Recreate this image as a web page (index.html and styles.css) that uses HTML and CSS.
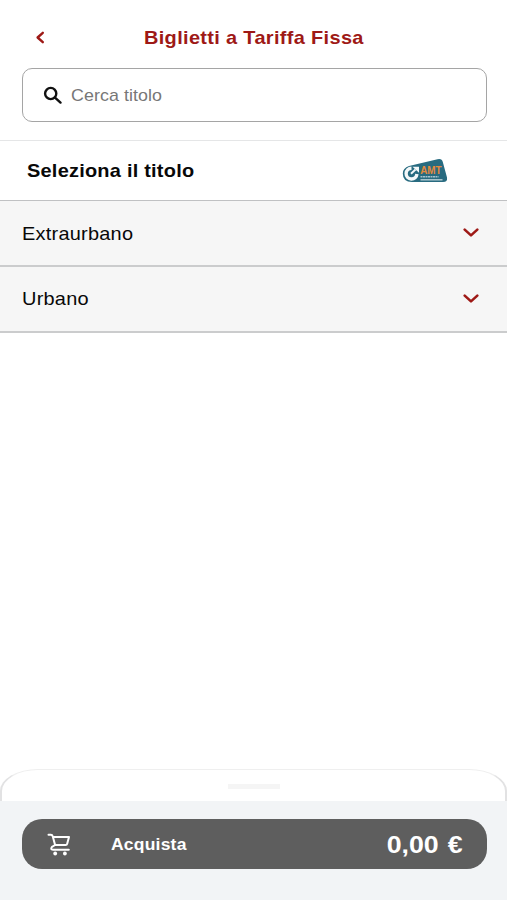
FILE: index.html
```html
<!DOCTYPE html>
<html lang="it">
<head>
<meta charset="utf-8">
<title>Biglietti a Tariffa Fissa</title>
<link rel="stylesheet" href="styles.css">
</head>
<body>
<div class="app">
  <header class="topbar">
    <svg class="back" viewBox="0 0 10 14" fill="none"><path d="M7.800 1.800 2.600 6.500l5.200 4.700"/></svg>
    <h1 class="title">Biglietti a Tariffa Fissa</h1>
  </header>
  <div class="search">
    <svg class="search-icon" viewBox="0 0 20 18" fill="none"><circle cx="7.700" cy="7.500" r="5.600"/><path d="m12 11.600 5.500 5"/></svg>
    <span class="placeholder">Cerca titolo</span>
  </div>
  <section class="heading">
    <h2 class="subtitle">Seleziona il titolo</h2>
    <svg class="logo" viewBox="0 0 46 26">
      <path d="M7 8 35.500 1.200q4.500-1 5.300 2.800L45 19.500q.8 4.500-4 4.500H10Q.8 24 .8 15.500.8 10 7 8Z" fill="#286b80"/>
      <path d="M9.500 10.200A5.400 5.400 0 1 0 14.900 16" fill="none" stroke="#f4f8f9" stroke-width="3.400"/>
      <path d="M9 15.700 13.500 11.500" fill="none" stroke="#f4f8f9" stroke-width="2"/>
      <path d="M10.500 8.800H17V14.800Z" fill="#f4f8f9"/>
      <text class="logo-name" x="18.200" y="16.300" textLength="21.500" lengthAdjust="spacingAndGlyphs">AMT</text>
      <path d="M18.500 18.700h18" stroke="#a8c3cb" stroke-width="1.600" stroke-dasharray="2 .5"/>
      <path d="M18.500 21.800h22" stroke="#b6ced5" stroke-width="1.400"/>
    </svg>
  </section>
  <ul class="list">
    <li class="row"><span class="row-label">Extraurbano</span><svg class="chevron" viewBox="0 0 18 10" fill="none"><path d="m2.700 1.600 6.300 5.800 6.300-5.800"/></svg></li>
    <li class="row"><span class="row-label">Urbano</span><svg class="chevron" viewBox="0 0 18 10" fill="none"><path d="m2.700 1.600 6.300 5.800 6.300-5.800"/></svg></li>
  </ul>
  <div class="sheet"><div class="handle"></div></div>
  <footer class="footer">
    <div class="buy">
      <svg class="cart" viewBox="0 0 24 24" fill="none"><path d="M1.500 2.800h2.300q1.500 0 2 1.700l2.300 8.500h10.500q1.300 0 1.600-1.300L22 5H6M8.100 13 5 14.800q-2 3 1 3h15.800"/><circle class="wheel" cx="8.200" cy="21.500" r="1.900"/><circle class="wheel" cx="17.900" cy="21.500" r="1.900"/></svg>
      <span class="buy-label">Acquista</span>
      <span class="price">0,00 €</span>
    </div>
  </footer>
</div>
</body>
</html>
```
FILE: styles.css
```css
* { box-sizing: border-box; }
body { margin: 0; background: #fff; font-family: "Liberation Sans", Arial, sans-serif; color: #080808; }
.app { width: 507px; height: 900px; display: flex; flex-direction: column; overflow: hidden; }
.topbar { height: 68px; padding: 8px 0 0 35px; display: flex; align-items: center; }
.back { width: 10px; height: 14px; stroke: #9e1916; stroke-width: 2.4; stroke-linecap: round; stroke-linejoin: round; }

/* Labels use a slightly extended face */
.title, .placeholder, .subtitle, .row-label, .buy-label { transform: scaleX(1.05); transform-origin: left center; white-space: nowrap; }
.title { margin: 0 0 0 98.500px; font-size: 19px; line-height: 24px; color: #9e1916; letter-spacing: .32px; }
.search { height: 54px; margin: 0 20.500px 0 21.500px; padding-left: 20px; border: 1px solid #a5a5a5; border-radius: 10px; display: flex; align-items: center; }
.search-icon { width: 20px; height: 18px; stroke: #111; stroke-width: 2.4; stroke-linecap: round; }
.placeholder { margin-left: 8px; padding-top: 1px; font-size: 17px; color: #777; letter-spacing: .05px; }
.heading { height: 60px; margin-top: 18px; padding: 0 59px 0 26.500px; border-top: 1px solid #e5e6e7; display: flex; align-items: center; justify-content: space-between; }
.subtitle { margin: 0; font-size: 19px; letter-spacing: .22px; }
.logo { width: 46px; height: 26px; }
.logo-name { font: bold 10px "Liberation Sans", Arial, sans-serif; fill: #e58a3c; }
.list { margin: 0; padding: 0; list-style: none; background: #f6f6f6; border-top: 1px solid #c0c1c3; }
.row { height: 66px; padding: 0 27px 0 21.500px; border-bottom: 2px solid #cbcccd; display: flex; align-items: center; justify-content: space-between; font-size: 19px; }
.row-label { padding-top: 1px; letter-spacing: .22px; }
.row:last-child .row-label { padding-top: 0; }
.chevron { width: 18px; height: 10px; stroke: #9e1916; stroke-width: 2.6; stroke-linecap: round; stroke-linejoin: round; }
.sheet { height: 32px; margin-top: auto; border: 1px solid #ededed; border-width: 1px 2px 0; border-color: #efefef #e2e2e3; border-radius: 38px 38px 0 0 / 22px 22px 0 0; display: flex; justify-content: center; }
.handle { width: 52px; height: 5px; margin-top: 14px; background: #f5f5f5; }
.footer { height: 99px; padding: 18px 20.500px 0 21.500px; background: #f2f4f6; }
.buy { height: 50px; padding: 0 24px 0 25px; border-radius: 20px; background: #5e5e5e; color: #fff; display: flex; align-items: center; font-weight: bold; }
.cart { width: 24px; height: 24px; stroke: #fff; stroke-width: 2; stroke-linecap: round; stroke-linejoin: round; }
.wheel { fill: #fff; stroke: none; }
.buy-label { margin-left: 40px; padding-top: 1px; font-size: 17px; letter-spacing: .2px; transform: scaleX(1.03); }
.price { margin-left: auto; padding-top: 1px; font-size: 24.500px; word-spacing: 1.500px; transform: scaleX(1.09); transform-origin: right center; }
```
